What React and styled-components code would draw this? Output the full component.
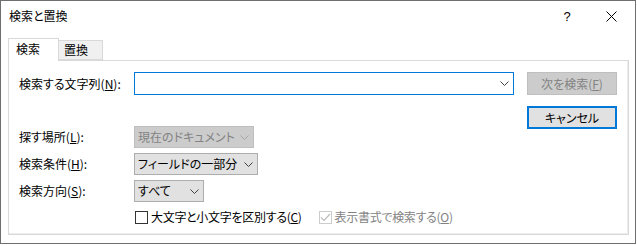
import React from "react";
import styled, { createGlobalStyle } from "styled-components";

const Global = createGlobalStyle`
  html, body { margin: 0; padding: 0; background: #ffffff; }
  body {
    font-family: "Noto Sans CJK JP", "Noto Sans", sans-serif;
    font-size: 12px;
    color: #000;
  }
  * { box-sizing: border-box; }
`;

const Window = styled.div`
  width: 636px;
  height: 244px;
  border: 1px solid #6f6f6f;
  background: #ffffff;
  display: flex;
  flex-direction: column;
  font-feature-settings: "palt";
  line-height: 1;
`;

const TitleBar = styled.div`
  height: 30px;
  display: flex;
  align-items: center;
  padding-left: 8px;
  padding-right: 4px;
`;

const Title = styled.div`
  flex: 1;
  font-size: 12px;
`;

const TitleButton = styled.div`
  width: 40px;
  height: 30px;
  display: flex;
  align-items: center;
  justify-content: center;
  font-size: 13px;
  font-family: "Liberation Sans", sans-serif;
  margin-left: ${(p) => p.$ml || 0}px;
`;

const Body = styled.div`
  padding: 8px 6px 0 7px;
`;

const TabStrip = styled.div`
  display: flex;
  align-items: flex-end;
  height: 22px;
  position: relative;
  z-index: 1;
  margin-bottom: -1px;
`;

const Tab = styled.div`
  height: ${(p) => (p.$active ? 23 : 20)}px;
  width: ${(p) => p.$w}px;
  border: 1px solid #d9d9d9;
  border-bottom: ${(p) => (p.$active ? "none" : "1px solid #d9d9d9")};
  border-left: ${(p) => (p.$active ? "1px solid #d9d9d9" : "none")};
  background: ${(p) => (p.$active ? "#ffffff" : "#f0f0f0")};
  display: flex;
  align-items: center;
  padding-left: ${(p) => p.$pl}px;
  padding-bottom: ${(p) => (p.$active ? 2 : 0)}px;
  font-size: 12px;
  margin-bottom: ${(p) => (p.$active ? 0 : 1)}px;
`;

const Panel = styled.div`
  height: 175px;
  border: 1px solid #d9d9d9;
  box-shadow: inset -1px -1px 0 #ececec;
  background: #ffffff;
  display: flex;
  padding: 11px 10px 0 10px;
`;

const Form = styled.div`
  width: 495px;
  display: flex;
  flex-direction: column;
`;

const Row = styled.div`
  display: flex;
  align-items: center;
  height: ${(p) => p.$h || 22}px;
  margin-top: ${(p) => p.$mt || 0}px;
`;

const Label = styled.div`
  width: 115px;
  font-size: 12px;
  white-space: nowrap;
`;

const U = styled.span`
  text-decoration: underline;
  text-underline-offset: 1px;
`;

const Combo = styled.div`
  width: 380px;
  height: 23px;
  border: 1px solid #0078d7;
  background: #ffffff;
  display: flex;
  align-items: center;
  justify-content: flex-end;
  padding-right: 4px;
`;

const Select = styled.div`
  width: ${(p) => p.$w}px;
  height: 22px;
  border: 1px solid ${(p) => (p.$disabled ? "#bfbfbf" : "#adadad")};
  background: ${(p) => (p.$disabled ? "#cccccc" : "#e1e1e1")};
  color: ${(p) => (p.$disabled ? "#838383" : "#000")};
  display: flex;
  align-items: center;
  justify-content: space-between;
  padding: 0 4px 0 3px;
  font-size: 12px;
  white-space: nowrap;
`;

const Chevron = ({ color = "#404040" }) => (
  <svg width="9" height="5" viewBox="0 0 9 5">
    <path d="M0.5 0.5 L4.5 4.5 L8.5 0.5" fill="none" stroke={color} strokeWidth="1" />
  </svg>
);

const Side = styled.div`
  margin-left: 13px;
  width: 90px;
  display: flex;
  flex-direction: column;
  gap: 11px;
`;

const Button = styled.div`
  height: 23px;
  display: flex;
  align-items: center;
  justify-content: center;
  font-size: 12px;
  border: ${(p) => (p.$default ? "2px solid #0078d7" : p.$disabled ? "1px solid #bfbfbf" : "1px solid #adadad")};
  background: ${(p) => (p.$disabled ? "#cccccc" : "#e1e1e1")};
  color: ${(p) => (p.$disabled ? "#838383" : "#000")};
`;

const CheckRow = styled.div`
  display: flex;
  align-items: center;
  margin-top: 8px;
  margin-left: 115px;
  height: 14px;
  letter-spacing: -0.3px;
`;

const CheckItem = styled.div`
  display: flex;
  align-items: center;
  gap: 3px;
  color: ${(p) => (p.$disabled ? "#838383" : "#000")};
  margin-left: ${(p) => p.$ml || 0}px;
  white-space: nowrap;
  font-size: 12px;
`;

const Box = styled.div`
  width: 13px;
  height: 13px;
  border: 1px solid ${(p) => (p.$disabled ? "#cccccc" : "#333333")};
  background: #ffffff;
  display: flex;
  align-items: center;
  justify-content: center;
  margin-left: 1px;
`;

export default function App() {
  return (
    <>
      <Global />
      <Window>
        <TitleBar>
          <Title>検索と置換</Title>
          <TitleButton>?</TitleButton>
          <TitleButton $ml={4}>
            <svg width="11" height="11" viewBox="0 0 11 11">
              <path d="M0.5 0.5 L10.5 10.5 M10.5 0.5 L0.5 10.5" stroke="#000" strokeWidth="1" />
            </svg>
          </TitleButton>
        </TitleBar>
        <Body>
          <TabStrip>
            <Tab $active $w={51} $pl={7}>検索</Tab>
            <Tab $w={44} $pl={5}>置換</Tab>
          </TabStrip>
          <Panel>
            <Form>
              <Row $h={23}>
                <Label>
                  検索する文字列(<U>N</U>):
                </Label>
                <Combo>
                  <Chevron />
                </Combo>
              </Row>
              <Row $mt={31}>
                <Label>
                  探す場所(<U>L</U>):
                </Label>
                <Select $w={120} $disabled>
                  現在のドキュメント
                  <Chevron color="#a6a6a6" />
                </Select>
              </Row>
              <Row $mt={5}>
                <Label>
                  検索条件(<U>H</U>):
                </Label>
                <Select $w={124}>
                  フィールドの一部分
                  <Chevron />
                </Select>
              </Row>
              <Row $mt={5}>
                <Label>
                  検索方向(<U>S</U>):
                </Label>
                <Select $w={70}>
                  すべて
                  <Chevron />
                </Select>
              </Row>
              <CheckRow>
                <CheckItem>
                  <Box />
                  <span>
                    大文字と小文字を区別する(<U>C</U>)
                  </span>
                </CheckItem>
                <CheckItem $disabled $ml={16}>
                  <Box $disabled>
                    <svg width="11" height="9" viewBox="0 0 11 9">
                      <path d="M1 4.5 L4 7.5 L10 1" fill="none" stroke="#bdbdbd" strokeWidth="1.2" />
                    </svg>
                  </Box>
                  <span>
                    表示書式で検索する(<U>O</U>)
                  </span>
                </CheckItem>
              </CheckRow>
            </Form>
            <Side>
              <Button $disabled>
                次を検索(<U>F</U>)
              </Button>
              <Button $default>キャンセル</Button>
            </Side>
          </Panel>
        </Body>
      </Window>
    </>
  );
}
